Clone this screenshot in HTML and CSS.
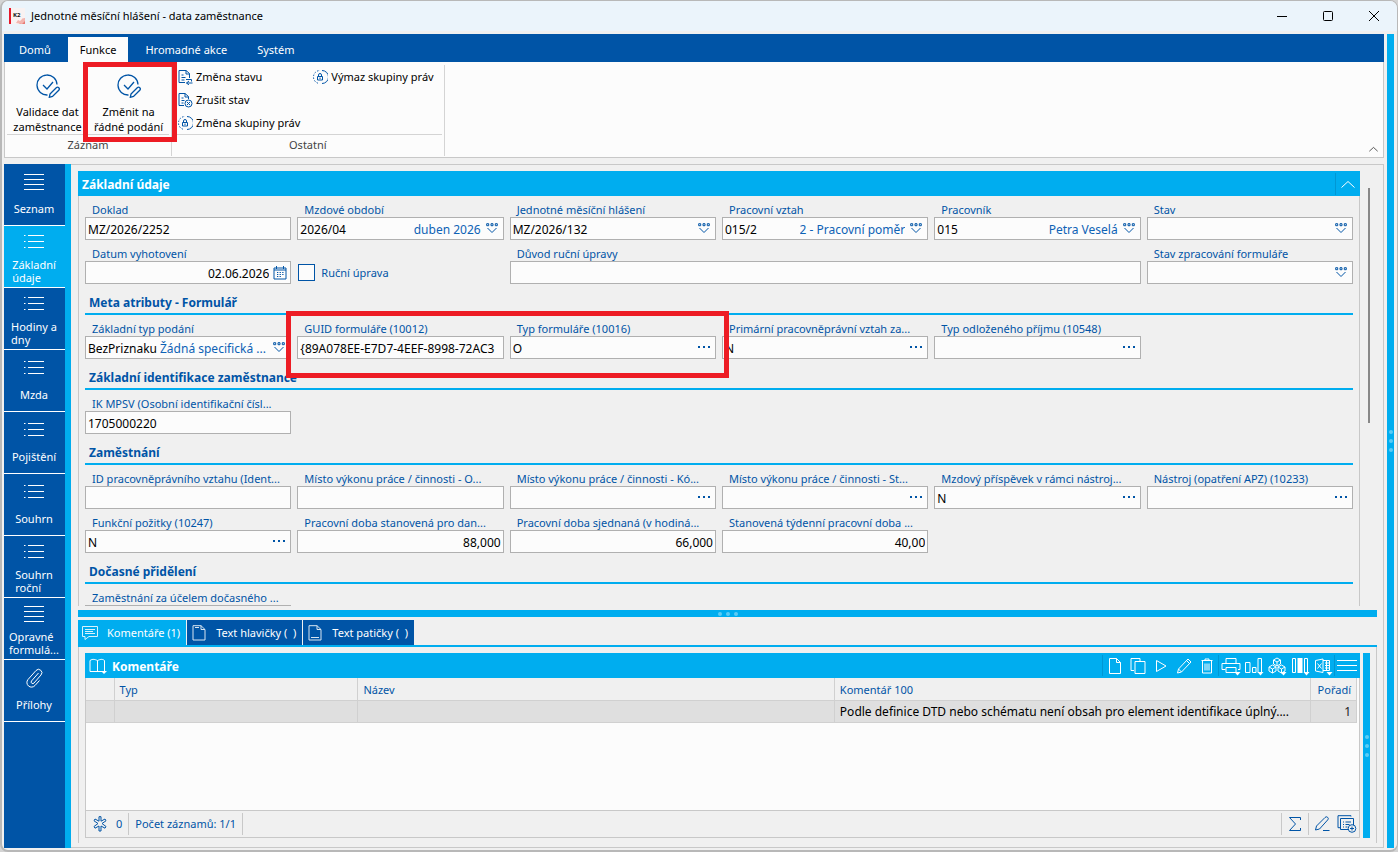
FILE: index.html
```html
<!DOCTYPE html>
<html lang="cs">
<head>
<meta charset="utf-8">
<title>Jednotné měsíční hlášení - data zaměstnance</title>
<link rel="stylesheet" href="styles.css">
</head>
<body>
<svg class="sprite" aria-hidden="true">
  <symbol id="check-pen" viewBox="0 0 24 24"><path d="M21 10.500A10 10 0 1 0 11.500 21M7 11l4 4 6-7M14 20l6.500-6.500a1.800 1.800 0 0 1 2.500 2.500L16.500 22.500l-3.200.8z"/></symbol>
  <symbol id="doc-arrow" viewBox="0 0 16 16"><path d="M12.500 9V4.500L9 1.500H2v12h6M9 1.500v3.500h3.500M4.500 6h2M4.500 8.500h4M4.500 11h3M9 10.500h5.500v2M9.500 14h6M12 12 9.500 14l2.500 2"/></symbol>
  <symbol id="doc-x" viewBox="0 0 16 16"><path d="M11.500 7V4.500L8 1.500H2v12h5M8 1.500v3.500h3.500M4.500 6h2M4.500 8.500h3M4.500 11h2"/><circle cx="11.500" cy="11.500" r="3.500"/><path d="m10 10 3 3m0-3-3 3"/></symbol>
  <symbol id="lock-ring" viewBox="0 0 16 16"><path d="M10 1.500a6.500 6.500 0 0 1 0 13"/><path d="M6 14.200A6.500 6.500 0 0 1 8 1.500" stroke-dasharray="1.500 1.500"/><path d="M5.500 7.500h5v3.500h-5zM6.500 7V6a1.500 1.500 0 0 1 3 0v1M8 8.500v1.500"/></symbol>
  <symbol id="lines" viewBox="0 0 20 20"><path d="M0 2.500h20M0 7.500h20M0 12.500h20M0 17.500h20"/></symbol>
  <symbol id="list" viewBox="0 0 20 20"><path d="M4 3.500h16M4 9.500h16M4 15.500h16M0 3.500h1.500M0 9.500h1.500M0 15.500h1.500"/></symbol>
  <symbol id="clip" viewBox="0 0 20 20"><path d="m14.500 5-7 8a1.500 1.500 0 0 0 2.500 2l7-8a3.300 3.300 0 0 0-5-4.500L4 11.500a4.600 4.600 0 0 0 7 6l4.500-5"/></symbol>
  <symbol id="drop" viewBox="0 0 12 11"><path d="M.7.700h2v2h-2zM5 .700h2v2H5zM9.300.700h2v2h-2zM1.500 5 6 9.500 10.500 5"/></symbol>
  <symbol id="dots" viewBox="0 0 12 11"><path class="solid" d="M0 4h2v2H0zM5 4h2v2H5zM10 4h2v2h-2z"/></symbol>
  <symbol id="calendar" viewBox="0 0 14 14"><path d="M1 2h12v11H1zM1 4h12M3.500 0v3M10.500 0v3"/><path d="M4 6.500h6.500M4 8.500h6.500M4 10.500h4" stroke-dasharray="1.300 1.300"/></symbol>
  <symbol id="up" viewBox="0 0 14 8"><path d="m.5 7.500 6.500-6 6.500 6"/></symbol>
  <symbol id="bubble" viewBox="0 0 16 16"><path d="M.5 1.500h15v10H7l-4 3v-3H.5zM3 4.500h10M3 6.500h8M3 8.500h10"/></symbol>
  <symbol id="page-head" viewBox="0 0 14 16"><path d="M1 .700h8l4 3.800V15H1zM9 .700V4.500h4M3 2.500h4"/></symbol>
  <symbol id="page-foot" viewBox="0 0 14 16"><path d="M1 .700h8l4 3.800V15H1zM9 .700V4.500h4M3 12.500h8"/></symbol>
  <symbol id="book" viewBox="0 0 18 16"><path d="M1 2.500c3-2 5-1 7.500 0 2.500-1 4.500-2 7 0v11H1zM8.500 2.500v11"/><path class="solid" d="M12 13h6l-3 3z"/></symbol>
  <symbol id="new" viewBox="0 0 20 20"><path d="M4.500 2.500h7l4 4v11h-11zM11.500 2.500v4h4"/></symbol>
  <symbol id="copy" viewBox="0 0 20 20"><path d="M6 14.500H3v-12h9v3M7 5.500h10v12H7z"/></symbol>
  <symbol id="play" viewBox="0 0 20 20"><path d="m5.500 4.500 9.500 5.500-9.500 5.500z"/></symbol>
  <symbol id="pencil" viewBox="0 0 20 20"><path d="m3.500 17 1-4 9.500-10 3 3-9.500 10zM12.500 4.500l3 3M4.500 13l3 3"/></symbol>
  <symbol id="trash" viewBox="0 0 20 20"><path d="M4.500 4.500h11M8 4V3h4v1M5.500 5v12h9V5M8 7.500v7M10 7.500v7M12 7.500v7"/></symbol>
  <symbol id="print" viewBox="0 0 20 20"><path d="M5 7.500V2.500h10v5M4.500 13.500H1v-6h18v6h-2M5 11.500h10v5H5z"/><path class="solid" d="M13.500 16h6l-3 3.500z"/></symbol>
  <symbol id="chart" viewBox="0 0 20 20"><path d="M1.500 6.500H6v10H1.500zM8.500 11.500H12v5H8.500zM14 2.500h3.500v14H14z"/><path class="solid" d="M13.500 16h6l-3 3.500z"/></symbol>
  <symbol id="cubes" viewBox="0 0 20 20"><path d="m10 2 3.500 2v4L10 10 6.500 8V4zM6.500 4 10 6l3.500-2M10 6v4M5.500 9 9 11v4l-3.500 2L2 15v-4zM2 11l3.500 2L9 11M5.500 13v4M14.500 9l3.500 2v4l-3.500 2L11 15v-4zM11 11l3.500 2 3.500-2M14.500 13v4"/><path class="solid" d="M13.500 16h6l-3 3.500z"/></symbol>
  <symbol id="columns" viewBox="0 0 20 20"><path d="M2.500 2.500h3v14h-3zM14.500 2.500h3v14h-3z"/><path class="solid" d="M7.500 2h5v15h-5zM13.500 16h6l-3 3.500z"/></symbol>
  <symbol id="excel" viewBox="0 0 20 20"><path d="M2.500 4.500 10 3v13.500l-7.500-1.500zM4.500 7.500l4 5M8.500 7.500l-4 5M10 4.500h6.500v10H10M12 7h4.500M12 9.500h4.500M12 12h4.500M13.500 5v9"/><path class="solid" d="M13.500 16h6l-3 3.500z"/></symbol>
  <symbol id="star" viewBox="0 0 16 16"><path d="M7 .700h2v4.500l4-2.200 1 1.800L10 7.500l4 3-1 1.700L9 10v5H7v-5l-4 2.200-1-1.700 4-3-4-2.700L3 3l4 2.200z"/></symbol>
  <symbol id="sigma" viewBox="0 0 16 16"><path d="M13.500 4V1.500h-11l6 6.500-6 6.500h11V12"/></symbol>
  <symbol id="edit-line" viewBox="0 0 16 16"><path d="m1.500 14 1-4L11 1.500a1.800 1.800 0 0 1 2.800 2.300L5.500 13zM9 14.500h6.500"/></symbol>
  <symbol id="forms-add" viewBox="0 0 20 18"><path d="M14 1.500V.700H1v12h2M3.500 3.500h13V10M3.500 3.500v11H11M6 7h1M8.500 7H14M6 9.500h1M8.500 9.500h4M6 12h1M8.500 12h2"/><circle cx="15" cy="13.500" r="3.800"/><path d="M15 11.500v4M13 13.500h4"/></symbol>
</svg>

<div class="window">
  <header class="titlebar">
    <svg class="logo" viewBox="0 0 16 16" role="img" aria-label="K2"><rect width="16" height="16" fill="#f8f2f2"/><rect width="2" height="16" fill="#e6192b"/><path d="M10 16 16 10v6z" fill="#e77a74"/><path d="M7 15l2-3 2 1 3-3 2 1v2l-3 3z" fill="#f3b6b0"/><text x="4" y="9" class="logo-text">K2</text></svg>
    <h1 class="title">Jednotné měsíční hlášení - data zaměstnance</h1>
    <div class="window-buttons">
      <button aria-label="Minimalizovat"><svg viewBox="0 0 10 10"><path d="M0 5.500h10"/></svg></button>
      <button aria-label="Maximalizovat"><svg viewBox="0 0 10 10"><rect x=".5" y=".5" width="9" height="9" rx="1"/></svg></button>
      <button aria-label="Zavřít"><svg viewBox="0 0 10 10"><path d="m0 0 10 10M10 0 0 10"/></svg></button>
    </div>
  </header>

  <div class="client">
    <div class="main">
      <nav class="ribbon-tabs">
        <button>Domů</button><button class="active">Funkce</button><button>Hromadné akce</button><button>Systém</button>
      </nav>
      <section class="ribbon">
        <div class="group">
          <div class="commands">
            <button class="big"><svg><use href="#check-pen"/></svg><span>Validace dat<br>zaměstnance</span></button>
            <button class="big marked"><svg><use href="#check-pen"/></svg><span>Změnit na<br>řádné podání</span><i class="marker marker-command"></i></button>
          </div>
          <div class="caption">Záznam</div>
        </div>
        <div class="group">
          <div class="commands small-grid">
            <button class="small"><svg><use href="#doc-arrow"/></svg>Změna stavu</button>
            <button class="small"><svg><use href="#doc-x"/></svg>Zrušit stav</button>
            <button class="small"><svg><use href="#lock-ring"/></svg>Změna skupiny práv</button>
            <button class="small"><svg><use href="#lock-ring"/></svg>Výmaz skupiny práv</button>
          </div>
          <div class="caption">Ostatní</div>
        </div>
        <button class="collapse" aria-label="Sbalit pás karet"><svg><use href="#up"/></svg></button>
      </section>

      <div class="workspace">
        <nav class="sidebar">
          <button><svg><use href="#lines"/></svg><span>Seznam</span></button>
          <button class="double active"><svg><use href="#list"/></svg><span>Základní<br>údaje</span></button>
          <button class="double"><svg><use href="#list"/></svg><span>Hodiny a<br>dny</span></button>
          <button><svg><use href="#list"/></svg><span>Mzda</span></button>
          <button><svg><use href="#list"/></svg><span>Pojištění</span></button>
          <button><svg><use href="#list"/></svg><span>Souhrn</span></button>
          <button class="double"><svg><use href="#list"/></svg><span>Souhrn<br>roční</span></button>
          <button class="double"><svg><use href="#lines"/></svg><span>Opravné<br>formulá...</span></button>
          <button><svg><use href="#clip"/></svg><span>Přílohy</span></button>
        </nav>

        <div class="content">
          <div class="upper">
            <section class="details">
              <div class="bar"><h2>Základní údaje</h2><button class="fold" aria-label="Sbalit"><svg><use href="#up"/></svg></button></div>
              <form class="form">
                <div class="fields">
                  <div class="field"><label for="f1">Doklad</label><div class="box"><input id="f1" value="MZ/2026/2252"></div></div>
                  <div class="field"><label for="f2">Mzdové období</label><div class="box"><input id="f2" value="2026/04"><span>duben 2026</span><button type="button" aria-label="Vybrat"><svg><use href="#drop"/></svg></button></div></div>
                  <div class="field"><label for="f3">Jednotné měsíční hlášení</label><div class="box"><input id="f3" value="MZ/2026/132"><button type="button" aria-label="Vybrat"><svg><use href="#drop"/></svg></button></div></div>
                  <div class="field"><label for="f4">Pracovní vztah</label><div class="box"><input id="f4" value="015/2"><span>2 - Pracovní poměr</span><button type="button" aria-label="Vybrat"><svg><use href="#drop"/></svg></button></div></div>
                  <div class="field"><label for="f5">Pracovník</label><div class="box"><input id="f5" value="015"><span>Petra Veselá</span><button type="button" aria-label="Vybrat"><svg><use href="#drop"/></svg></button></div></div>
                  <div class="field"><label for="f6">Stav</label><div class="box"><input id="f6"><button type="button" aria-label="Vybrat"><svg><use href="#drop"/></svg></button></div></div>
                  <div class="field"><label for="f7">Datum vyhotovení</label><div class="box"><input id="f7" class="right" value="02.06.2026"><button type="button" class="cal" aria-label="Kalendář"><svg><use href="#calendar"/></svg></button></div></div>
                  <div class="check"><input type="checkbox" id="f8"><label for="f8">Ruční úprava</label></div>
                  <div class="field span3"><label for="f9">Důvod ruční úpravy</label><div class="box"><input id="f9"></div></div>
                  <div class="field"><label for="f10">Stav zpracování formuláře</label><div class="box"><input id="f10"><button type="button" aria-label="Vybrat"><svg><use href="#drop"/></svg></button></div></div>
                </div>
                <h3>Meta atributy - Formulář</h3>
                <div class="fields">
                  <div class="field"><label for="f11">Základní typ podání</label><div class="box"><input id="f11" class="code" value="BezPriznaku"><span class="grow">Žádná specifická ...</span><button type="button" aria-label="Vybrat"><svg><use href="#drop"/></svg></button></div></div>
                  <div class="field"><label for="f12">GUID formuláře (10012)</label><div class="box"><input id="f12" value="{89A078EE-E7D7-4EEF-8998-72AC3"></div></div>
                  <div class="field"><label for="f13">Typ formuláře (10016)</label><div class="box"><input id="f13" value="O"><button type="button" aria-label="Vybrat"><svg><use href="#dots"/></svg></button></div></div>
                  <div class="field"><label for="f14">Primární pracovněprávní vztah za...</label><div class="box"><input id="f14" value="N"><button type="button" aria-label="Vybrat"><svg><use href="#dots"/></svg></button></div></div>
                  <div class="field"><label for="f15">Typ odloženého příjmu (10548)</label><div class="box"><input id="f15"><button type="button" aria-label="Vybrat"><svg><use href="#dots"/></svg></button></div></div>
                  <i class="marker marker-fields"></i>
                </div>
                <h3>Základní identifikace zaměstnance</h3>
                <div class="fields">
                  <div class="field"><label for="f16">IK MPSV (Osobní identifikační čísl...</label><div class="box"><input id="f16" value="1705000220"></div></div>
                </div>
                <h3>Zaměstnání</h3>
                <div class="fields">
                  <div class="field"><label for="f17">ID pracovněprávního vztahu (Ident...</label><div class="box"><input id="f17"></div></div>
                  <div class="field"><label for="f18">Místo výkonu práce / činnosti - O...</label><div class="box"><input id="f18"></div></div>
                  <div class="field"><label for="f19">Místo výkonu práce / činnosti - Kó...</label><div class="box"><input id="f19"><button type="button" aria-label="Vybrat"><svg><use href="#dots"/></svg></button></div></div>
                  <div class="field"><label for="f20">Místo výkonu práce / činnosti - St...</label><div class="box"><input id="f20"><button type="button" aria-label="Vybrat"><svg><use href="#dots"/></svg></button></div></div>
                  <div class="field"><label for="f21">Mzdový příspěvek v rámci nástroj...</label><div class="box"><input id="f21" value="N"><button type="button" aria-label="Vybrat"><svg><use href="#dots"/></svg></button></div></div>
                  <div class="field"><label for="f22">Nástroj (opatření APZ) (10233)</label><div class="box"><input id="f22"><button type="button" aria-label="Vybrat"><svg><use href="#dots"/></svg></button></div></div>
                  <div class="field"><label for="f23">Funkční požitky (10247)</label><div class="box"><input id="f23" value="N"><button type="button" aria-label="Vybrat"><svg><use href="#dots"/></svg></button></div></div>
                  <div class="field"><label for="f24">Pracovní doba stanovená pro dan...</label><div class="box"><input id="f24" class="right" value="88,000"></div></div>
                  <div class="field"><label for="f25">Pracovní doba sjednaná (v hodiná...</label><div class="box"><input id="f25" class="right" value="66,000"></div></div>
                  <div class="field"><label for="f26">Stanovená týdenní pracovní doba ...</label><div class="box"><input id="f26" class="right" value="40,00"></div></div>
                </div>
                <h3>Dočasné přidělení</h3>
                <div class="fields">
                  <div class="field"><label for="f27">Zaměstnání za účelem dočasného ...</label><div class="box"><input id="f27"></div></div>
                </div>
              </form>
            </section>
            <div class="scroll"><div class="thumb"></div></div>
          </div>

          <div class="splitter"><i></i><i></i><i></i></div>

          <div class="lower">
            <nav class="tabs">
              <button class="active"><svg><use href="#bubble"/></svg>Komentáře (1)</button>
              <button><svg><use href="#page-head"/></svg>Text hlavičky (&nbsp; )</button>
              <button><svg><use href="#page-foot"/></svg>Text patičky (&nbsp; )</button>
            </nav>
            <div class="tab-panel">
              <section class="grid">
                <div class="bar grid-bar">
                  <svg class="book"><use href="#book"/></svg><h2>Komentáře</h2>
                  <div class="tools">
                    <button class="sep" aria-label="Nový"><svg><use href="#new"/></svg></button>
                    <button aria-label="Kopie"><svg><use href="#copy"/></svg></button>
                    <button aria-label="Spustit"><svg><use href="#play"/></svg></button>
                    <button aria-label="Změna"><svg><use href="#pencil"/></svg></button>
                    <button aria-label="Smazat"><svg><use href="#trash"/></svg></button>
                    <button class="sep" aria-label="Tisk"><svg><use href="#print"/></svg></button>
                    <button aria-label="Graf"><svg><use href="#chart"/></svg></button>
                    <button aria-label="Kostka"><svg><use href="#cubes"/></svg></button>
                    <button aria-label="Sloupce"><svg><use href="#columns"/></svg></button>
                    <button aria-label="Excel"><svg><use href="#excel"/></svg></button>
                    <button class="sep" aria-label="Menu"><svg class="menu" viewBox="0 0 20 20"><path d="M0 4.500h20M0 9.500h20M0 14.500h20"/></svg></button>
                  </div>
                </div>
                <div class="grid-body">
                  <table>
                    <colgroup><col class="c0"><col class="c1"><col class="c2"><col class="c3"><col class="c4"></colgroup>
                    <thead><tr><th></th><th>Typ</th><th>Název</th><th>Komentář 100</th><th class="num">Pořadí</th></tr></thead>
                    <tbody><tr><td></td><td></td><td></td><td>Podle definice DTD nebo schématu není obsah pro element identifikace úplný....</td><td class="num">1</td></tr></tbody>
                  </table>
                </div>
                <footer class="status">
                  <div class="cell"><svg><use href="#star"/></svg><span>0</span></div>
                  <div class="cell">Počet záznamů: 1/1</div>
                  <div class="actions">
                    <button aria-label="Součet"><svg><use href="#sigma"/></svg></button>
                    <button aria-label="Upravit"><svg><use href="#edit-line"/></svg></button>
                    <button class="plain" aria-label="Přidat formulář"><svg class="wide"><use href="#forms-add"/></svg></button>
                  </div>
                </footer>
              </section>
              <div class="side-strip"><i></i><i></i><i></i></div>
            </div>
          </div>
        </div>
      </div>
    </div>
    <div class="edge-strip"><i></i><i></i><i></i></div>
  </div>
</div>
</body>
</html>
```
FILE: styles.css
```css
:root {
  --navy: #0054a6;
  --cyan: #00adef;
  --face: #f0f0f0;
  --paper: #fcfcfc;
  --line: #c8c8c8;
}
* { box-sizing: border-box; }
body {
  margin: 0;
  background: #d4d4d4;
  font-family: "Noto Sans", "Open Sans", sans-serif;
  font-size: 11px;
  line-height: 16px;
  color: #000;
}
button, input { font: inherit; color: inherit; margin: 0; padding: 0; border: 0; background: none; }
h1, h2, h3 { margin: 0; font-size: 12px; }
svg { fill: none; stroke: currentColor; flex: none; display: block; }
.solid { fill: currentColor; stroke: none; }
.sprite { position: absolute; width: 0; height: 0; }

.window {
  display: flex;
  flex-direction: column;
  height: 100vh;
  border: 1px solid #b8b8b8;
  border-width: 1px 1px 2px 2px;
  border-radius: 8px;
  background: var(--face);
  overflow: hidden;
}
.titlebar {
  display: flex;
  align-items: center;
  flex: none;
  height: 30px;
  padding-left: 7px;
  background: #ebf4fb;
}
.logo { width: 16px; height: 16px; stroke: none; }
.logo-text { font-size: 6px; font-weight: 700; fill: #111; }
.title { margin-left: 6px; font-size: 11px; font-weight: 400; }
.window-buttons { display: flex; margin-left: auto; }
.window-buttons button { display: grid; place-items: center; width: 46px; height: 29px; }
.window-buttons svg { width: 10px; height: 10px; overflow: visible; }

.client { display: flex; flex: 1; min-height: 0; gap: 3px; padding: 3px 3px 2px 2px; }
.main { display: flex; flex-direction: column; flex: 1; min-width: 0; }
.edge-strip, .side-strip {
  display: flex;
  flex-direction: column;
  align-items: center;
  justify-content: center;
  gap: 5px;
  flex: none;
  width: 7px;
  background: var(--cyan);
}
.edge-strip i, .side-strip i, .splitter i { width: 4px; height: 4px; border-radius: 2px; background: #5ccbf5; }

.ribbon-tabs { display: flex; flex: none; height: 28px; padding-top: 3px; background: var(--navy); color: #fff; }
.ribbon-tabs button { padding: 0 15px; }
.ribbon-tabs .active { margin: 0 2px; padding: 0 12px; background: var(--paper); color: #000; }
.ribbon {
  position: relative;
  display: flex;
  flex: none;
  height: 96px;
  margin-bottom: 6px;
  padding: 3px 0 1px;
  border: 1px solid var(--line);
  border-top: 0;
  background: var(--paper);
}
.group { display: flex; flex-direction: column; padding: 0 2px; border-right: 1px solid #d4d4d4; }
.commands { display: flex; flex: 1; border-bottom: 1px solid #d4d4d4; }
.caption { height: 21px; line-height: 20px; text-align: center; color: #444; }
.big { position: relative; display: flex; flex-direction: column; align-items: center; width: 81px; padding-top: 9px; line-height: 15px; white-space: nowrap; }
.big svg { width: 24px; height: 24px; margin-bottom: 6px; color: var(--navy); stroke-width: 1.3; overflow: visible; }
.small-grid { display: grid; grid-template-rows: repeat(3, 23px); grid-auto-flow: column; gap: 0 12px; justify-content: start; padding: 0 8px 0 3px; }
.small { display: flex; align-items: center; gap: 3px; white-space: nowrap; }
.small svg { width: 16px; height: 16px; color: var(--navy); }
.collapse { position: absolute; right: 5px; bottom: 5px; }
.collapse svg { width: 9px; height: 6px; }
.marker { position: absolute; z-index: 2; border: 5px solid #ed1c24; pointer-events: none; }
.marker-command { inset: -3px -8px -8px -5px; }
.marker-fields { grid-column: 2 / 4; inset: -4px -13px -19px -11px; }

.workspace { display: flex; flex: 1; min-height: 0; }
.sidebar { flex: none; width: 67px; border-right: 6px solid var(--cyan); background: var(--navy); color: #fff; }
.sidebar button { display: flex; flex-direction: column; align-items: center; width: 100%; height: 62px; padding: 8px 1px 0 0; gap: 10px; border-bottom: 1px solid #fff; line-height: 13px; text-align: left; }
.sidebar .double { padding-top: 6px; gap: 6px; }
.sidebar .active { background: var(--cyan); }
.sidebar svg { width: 20px; height: 20px; }

.content { display: flex; flex-direction: column; flex: 1; min-width: 0; padding: 6px 6px 4px 7px; border: 1px solid var(--line); border-left: 0; }
.upper { display: flex; flex: 434 1 0; min-height: 0; gap: 8px; padding-right: 7px; }
.details { display: flex; flex-direction: column; flex: 1; min-width: 0; }
.scroll { flex: none; width: 2px; padding-top: 17px; }
.thumb { width: 2px; height: 235px; background: #888; }
.bar { display: flex; align-items: center; flex: none; height: 25px; padding-left: 4px; background: var(--cyan); color: #fff; }
.bar h2 { padding-top: 2px; }
.fold { margin-left: auto; padding: 7px 5px; border-left: 1px solid #0097d4; }
.fold svg { width: 14px; height: 8px; }
.form { flex: 1; min-height: 0; overflow: hidden; padding: 0 6px; border: 1px solid var(--line); border-width: 0 1px; }
.fields { position: relative; display: grid; grid-template-columns: repeat(6, minmax(0, 1fr)); column-gap: 6px; }
.field { min-width: 0; }
.field label { display: block; height: 21px; padding: 6px 0 0 7px; line-height: 15px; overflow: hidden; white-space: nowrap; color: var(--navy); }
.box { display: flex; align-items: center; height: 23px; padding: 0 2px; border: 1px solid #b0b0b0; background: var(--paper); font-size: 12px; }
.box input { flex: 1; min-width: 0; width: 0; height: 20px; padding-top: 2px; }
.box .right { text-align: right; }
.box .code { flex: none; width: 72px; }
.box span { padding-top: 2px; color: #0e62b5; white-space: nowrap; overflow: hidden; }
.box .grow { flex: 1; }
.box button { margin: 0 3px 0 5px; color: var(--navy); }
.box svg { width: 12px; height: 11px; }
.box .cal { margin: 0 1px 0 4px; }
.box .cal svg { width: 14px; height: 14px; }
.span3 { grid-column: span 3; }
.check { display: flex; align-items: center; gap: 6px; padding: 21px 0 0 1px; color: var(--navy); }
.check input { appearance: none; width: 17px; height: 17px; border: 1px solid var(--navy); background: var(--paper); }
.form h3 { height: 31px; padding: 11px 0 0 4px; border-bottom: 2px solid var(--cyan); color: var(--navy); }

.splitter { display: flex; align-items: center; justify-content: center; gap: 4px; flex: none; height: 7px; margin: 4px 0 3px; background: var(--cyan); }
.lower { display: flex; flex-direction: column; flex: 222 1 0; min-height: 0; }
.tabs { display: flex; flex: none; height: 27px; border-bottom: 2px solid var(--cyan); }
.tabs button { display: flex; align-items: center; gap: 9px; padding: 0 6px 0 4px; margin-right: 1px; background: var(--navy); color: #fff; white-space: nowrap; }
.tabs .active { background: var(--cyan); }
.tabs svg { width: 16px; height: 16px; opacity: .85; }
.tab-panel { display: flex; flex: 1; min-height: 0; gap: 3px; padding: 6px 6px 5px; border: 1px solid var(--line); border-width: 0 1px; }
.grid { display: flex; flex-direction: column; flex: 1; min-width: 0; }
.grid-bar { padding-right: 2px; }
.book { width: 18px; height: 16px; margin-right: 5px; }
.tools { display: flex; margin-left: auto; }
.tools button { display: grid; place-items: center; width: 23px; height: 21px; border-left: 1px solid transparent; }
.tools .sep { border-left-color: #0097d4; width: 24px; }
.tools svg { width: 20px; height: 20px; }
.grid-body { flex: 1; min-height: 0; padding-right: 2px; border: 1px solid var(--line); border-top: 0; background: var(--paper); }
table { width: 100%; border-collapse: collapse; table-layout: fixed; }
.c0 { width: 28px; }
.c1 { width: 19.2%; }
.c2 { width: 37.5%; }
.c4 { width: 46px; }
th, td { height: 22px; padding: 1px 5px 0; border-right: 1px solid #d0d0d0; border-bottom: 1px solid #d0d0d0; text-align: left; font-weight: 400; white-space: nowrap; overflow: hidden; }
th { background: var(--face); color: var(--navy); }
td { background: #dfdfdf; font-size: 12px; }
.num { padding-left: 0; text-align: right; }
td.num { color: #222; }
.status { display: flex; flex: none; height: 27px; padding: 2px 0; border: 1px solid var(--line); border-top: 0; color: var(--navy); }
.cell { display: flex; align-items: center; gap: 8px; padding: 0 6px; border-right: 1px solid var(--line); }
.status svg { width: 16px; height: 16px; }
.status .wide { width: 20px; height: 18px; }
.actions { display: flex; margin-left: auto; }
.actions button { padding: 0 5px; border-left: 1px solid var(--line); }
.actions .plain { padding: 0 2px; border-left: 0; }
```
